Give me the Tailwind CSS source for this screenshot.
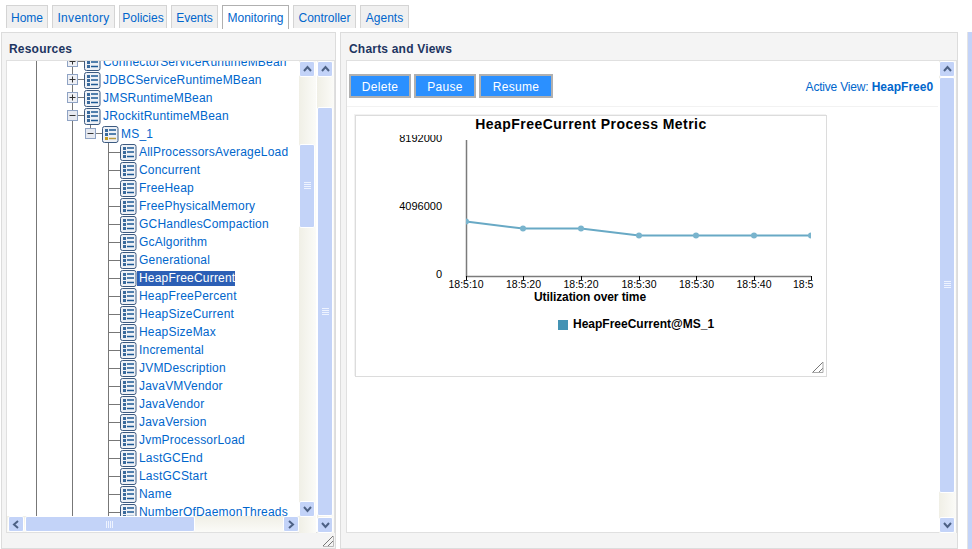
<!DOCTYPE html>
<html lang="en">
<head>
    <meta charset="UTF-8">
    <title>Monitoring</title>
    <script src="https://cdn.jsdelivr.net/npm/@tailwindcss/browser@4"></script>
</head>
<body class="bg-white h-[549px] w-[972px] overflow-hidden font-['Liberation_Sans',sans-serif] text-[12px] text-[#0066cc]">
    <!-- tabs -->
    <nav class="flex gap-[4px] pl-[6px] pt-[5px] h-[32px] items-start">
        <a class="w-[42px] h-[23px] text-center leading-[24px] bg-[#f0f0f0] border border-b-0 border-[#d4d4d4]">Home</a>
        <a class="w-[63px] h-[23px] text-center leading-[24px] bg-[#f0f0f0] border border-b-0 border-[#d4d4d4] tracking-[0.3px]">Inventory</a>
        <a class="w-[48px] h-[23px] text-center leading-[24px] bg-[#f0f0f0] border border-b-0 border-[#d4d4d4]">Policies</a>
        <a class="w-[47px] h-[23px] text-center leading-[24px] bg-[#f0f0f0] border border-b-0 border-[#d4d4d4]">Events</a>
        <a class="w-[67px] h-[24px] text-center leading-[24px] bg-white border border-b-0 border-[#b0b0b0]">Monitoring</a>
        <a class="w-[63px] h-[23px] text-center leading-[24px] bg-[#f0f0f0] border border-b-0 border-[#d4d4d4]">Controller</a>
        <a class="w-[49px] h-[23px] text-center leading-[24px] bg-[#f0f0f0] border border-b-0 border-[#d4d4d4]">Agents</a>
    </nav>

    <div class="flex h-[517px]">
        <!-- left panel -->
        <section class="relative ml-[1px] w-[335px] h-full bg-[#f4f4f4] border border-[#dcdcdc] flex flex-col">
            <h2 class="h-[27px] pl-[7px] pt-[8px] leading-[16px] font-bold text-[#1d3461] text-[12px] tracking-[0.2px]">Resources</h2>
            <div class="ml-[4px] w-[329px] h-[473px] bg-white border border-[#e0e0e0] flex">
                <div class="w-[293px] flex flex-col">
                    <div class="relative h-[456px] overflow-hidden" id="tree">
                        <!-- guide lines -->
                        <div class="absolute left-[29px] top-0 bottom-0 w-px bg-[#777]"></div>
                        <div class="absolute left-[65px] top-0 bottom-0 w-px bg-[#777]"></div>
                        <div class="absolute left-[101px] top-[82px] bottom-0 w-px bg-[#777]"></div>
                        <div class="absolute left-[83px] top-[64px] h-[6px] w-px bg-[#777]"></div>
                        <ul class="relative -mt-[8px] list-none">
                            <li class="flex items-center h-[18px]"><svg class="ml-[53px] shrink-0" width="41" height="18" viewBox="0 0 41 18"><use href="#plus"/><use href="#bean" x="17"/></svg><span class="ml-[2px] tracking-[0.2px]">ConnectorServiceRuntimeMBean</span></li>
                            <li class="flex items-center h-[18px]"><svg class="ml-[53px] shrink-0" width="41" height="18" viewBox="0 0 41 18"><use href="#plus"/><use href="#bean" x="17"/></svg><span class="ml-[2px] tracking-[0.2px]">JDBCServiceRuntimeMBean</span></li>
                            <li class="flex items-center h-[18px]"><svg class="ml-[53px] shrink-0" width="41" height="18" viewBox="0 0 41 18"><use href="#plus"/><use href="#bean" x="17"/></svg><span class="ml-[2px] tracking-[0.2px]">JMSRuntimeMBean</span></li>
                            <li class="flex items-center h-[18px]"><svg class="ml-[53px] shrink-0" width="41" height="18" viewBox="0 0 41 18"><use href="#minus"/><use href="#bean" x="17"/></svg><span class="ml-[2px] tracking-[0.2px]">JRockitRuntimeMBean</span></li>
                            <li class="flex items-center h-[18px]"><svg class="ml-[71px] shrink-0" width="41" height="18" viewBox="0 0 41 18"><use href="#minus"/><use href="#server" x="17"/></svg><span class="ml-[2px] tracking-[0.2px]">MS_1</span></li>
                            <li class="flex items-center h-[18px]"><svg class="ml-[101px] shrink-0" width="30" height="18" viewBox="0 0 30 18"><use href="#leaf"/></svg><span class="ml-[1px] tracking-[0.2px]">AllProcessorsAverageLoad</span></li>
                            <li class="flex items-center h-[18px]"><svg class="ml-[101px] shrink-0" width="30" height="18" viewBox="0 0 30 18"><use href="#leaf"/></svg><span class="ml-[1px] tracking-[0.2px]">Concurrent</span></li>
                            <li class="flex items-center h-[18px]"><svg class="ml-[101px] shrink-0" width="30" height="18" viewBox="0 0 30 18"><use href="#leaf"/></svg><span class="ml-[1px] tracking-[0.2px]">FreeHeap</span></li>
                            <li class="flex items-center h-[18px]"><svg class="ml-[101px] shrink-0" width="30" height="18" viewBox="0 0 30 18"><use href="#leaf"/></svg><span class="ml-[1px] tracking-[0.2px]">FreePhysicalMemory</span></li>
                            <li class="flex items-center h-[18px]"><svg class="ml-[101px] shrink-0" width="30" height="18" viewBox="0 0 30 18"><use href="#leaf"/></svg><span class="ml-[1px] tracking-[0.2px]">GCHandlesCompaction</span></li>
                            <li class="flex items-center h-[18px]"><svg class="ml-[101px] shrink-0" width="30" height="18" viewBox="0 0 30 18"><use href="#leaf"/></svg><span class="ml-[1px] tracking-[0.2px]">GcAlgorithm</span></li>
                            <li class="flex items-center h-[18px]"><svg class="ml-[101px] shrink-0" width="30" height="18" viewBox="0 0 30 18"><use href="#leaf"/></svg><span class="ml-[1px] tracking-[0.2px]">Generational</span></li>
                            <li class="flex items-center h-[18px]"><svg class="ml-[101px] shrink-0" width="30" height="18" viewBox="0 0 30 18"><use href="#leaf"/></svg><span class="-ml-[1px] pl-[2px] tracking-[0.2px] bg-[#2c5fb5] text-white leading-[15px]">HeapFreeCurrent</span></li>
                            <li class="flex items-center h-[18px]"><svg class="ml-[101px] shrink-0" width="30" height="18" viewBox="0 0 30 18"><use href="#leaf"/></svg><span class="ml-[1px] tracking-[0.2px]">HeapFreePercent</span></li>
                            <li class="flex items-center h-[18px]"><svg class="ml-[101px] shrink-0" width="30" height="18" viewBox="0 0 30 18"><use href="#leaf"/></svg><span class="ml-[1px] tracking-[0.2px]">HeapSizeCurrent</span></li>
                            <li class="flex items-center h-[18px]"><svg class="ml-[101px] shrink-0" width="30" height="18" viewBox="0 0 30 18"><use href="#leaf"/></svg><span class="ml-[1px] tracking-[0.2px]">HeapSizeMax</span></li>
                            <li class="flex items-center h-[18px]"><svg class="ml-[101px] shrink-0" width="30" height="18" viewBox="0 0 30 18"><use href="#leaf"/></svg><span class="ml-[1px] tracking-[0.2px]">Incremental</span></li>
                            <li class="flex items-center h-[18px]"><svg class="ml-[101px] shrink-0" width="30" height="18" viewBox="0 0 30 18"><use href="#leaf"/></svg><span class="ml-[1px] tracking-[0.2px]">JVMDescription</span></li>
                            <li class="flex items-center h-[18px]"><svg class="ml-[101px] shrink-0" width="30" height="18" viewBox="0 0 30 18"><use href="#leaf"/></svg><span class="ml-[1px] tracking-[0.2px]">JavaVMVendor</span></li>
                            <li class="flex items-center h-[18px]"><svg class="ml-[101px] shrink-0" width="30" height="18" viewBox="0 0 30 18"><use href="#leaf"/></svg><span class="ml-[1px] tracking-[0.2px]">JavaVendor</span></li>
                            <li class="flex items-center h-[18px]"><svg class="ml-[101px] shrink-0" width="30" height="18" viewBox="0 0 30 18"><use href="#leaf"/></svg><span class="ml-[1px] tracking-[0.2px]">JavaVersion</span></li>
                            <li class="flex items-center h-[18px]"><svg class="ml-[101px] shrink-0" width="30" height="18" viewBox="0 0 30 18"><use href="#leaf"/></svg><span class="ml-[1px] tracking-[0.2px]">JvmProcessorLoad</span></li>
                            <li class="flex items-center h-[18px]"><svg class="ml-[101px] shrink-0" width="30" height="18" viewBox="0 0 30 18"><use href="#leaf"/></svg><span class="ml-[1px] tracking-[0.2px]">LastGCEnd</span></li>
                            <li class="flex items-center h-[18px]"><svg class="ml-[101px] shrink-0" width="30" height="18" viewBox="0 0 30 18"><use href="#leaf"/></svg><span class="ml-[1px] tracking-[0.2px]">LastGCStart</span></li>
                            <li class="flex items-center h-[18px]"><svg class="ml-[101px] shrink-0" width="30" height="18" viewBox="0 0 30 18"><use href="#leaf"/></svg><span class="ml-[1px] tracking-[0.2px]">Name</span></li>
                            <li class="flex items-center h-[18px]"><svg class="ml-[101px] shrink-0" width="30" height="18" viewBox="0 0 30 18"><use href="#leaf"/></svg><span class="ml-[1px] tracking-[0.2px]">NumberOfDaemonThreads</span></li>
                        </ul>
                    </div>
                    <!-- horizontal scrollbar -->
                    <div class="h-[16px] pl-px flex bg-gradient-to-b from-[#f0efe6] to-[#fbfbf8] gap-[1px]">
                        <button class="w-[16px] h-[16px] bg-[#c3d3f8] border border-white rounded-[2px] flex items-center justify-center"><svg width="8" height="9" viewBox="0 0 8 9"><path d="M6 1 2 4.5 6 8" fill="none" stroke="#4d6185" stroke-width="2"/></svg></button>
                        <div class="w-[170px] h-[16px] bg-[#c3d3f8] border border-white rounded-[2px] flex items-center justify-center"><svg width="8" height="7" viewBox="0 0 8 7"><path d="M.5 0v7M2.5 0v7M4.5 0v7M6.5 0v7" stroke="#eef3ff"/></svg></div>
                        <div class="flex-1"></div>
                        <button class="w-[16px] h-[16px] bg-[#c3d3f8] border border-white rounded-[2px] flex items-center justify-center"><svg width="8" height="9" viewBox="0 0 8 9"><path d="M2 1 6 4.5 2 8" fill="none" stroke="#4d6185" stroke-width="2"/></svg></button>
                    </div>
                </div>
                <!-- tree vertical scrollbar -->
                <div class="w-[17px] h-[472px] flex flex-col bg-gradient-to-r from-[#f0efe6] to-[#fbfbf8]">
                    <button class="w-[16px] h-[16px] bg-[#c3d3f8] border border-white rounded-[2px] flex items-center justify-center"><svg width="9" height="8" viewBox="0 0 9 8"><path d="M1 6 4.5 2 8 6" fill="none" stroke="#4d6185" stroke-width="2"/></svg></button>
                    <div class="mt-[67px] w-[16px] h-[84px] bg-[#c3d3f8] border border-white rounded-[2px] flex items-center justify-center"><svg width="7" height="8" viewBox="0 0 7 8"><path d="M0 .5h7M0 2.5h7M0 4.5h7M0 6.5h7" stroke="#eef3ff"/></svg></div>
                    <div class="flex-1"></div>
                    <button class="mb-[16px] w-[16px] h-[16px] bg-[#c3d3f8] border border-white rounded-[2px] flex items-center justify-center"><svg width="9" height="8" viewBox="0 0 9 8"><path d="M1 2 4.5 6 8 2" fill="none" stroke="#4d6185" stroke-width="2"/></svg></button>
                </div>
                <!-- outer vertical scrollbar -->
                <div class="ml-[1px] w-[17px] h-[472px] flex flex-col bg-gradient-to-r from-[#f0efe6] to-[#fbfbf8]">
                    <button class="w-[16px] h-[16px] bg-[#c3d3f8] border border-white rounded-[2px] flex items-center justify-center"><svg width="9" height="8" viewBox="0 0 9 8"><path d="M1 6 4.5 2 8 6" fill="none" stroke="#4d6185" stroke-width="2"/></svg></button>
                    <div class="mt-[30px] w-[16px] flex-1 bg-[#c3d3f8] border border-white rounded-[2px] flex items-center justify-center"><svg width="7" height="8" viewBox="0 0 7 8"><path d="M0 .5h7M0 2.5h7M0 4.5h7M0 6.5h7" stroke="#eef3ff"/></svg></div>
                    <button class="w-[16px] h-[16px] mt-[1px] bg-[#c3d3f8] border border-white rounded-[2px] flex items-center justify-center"><svg width="9" height="8" viewBox="0 0 9 8"><path d="M1 2 4.5 6 8 2" fill="none" stroke="#4d6185" stroke-width="2"/></svg></button>
                </div>
            </div>
            <svg class="absolute right-[1px] bottom-[1px]" width="12" height="12" viewBox="0 0 12 12"><path d="M1 11 11 1M6 11 11 6" stroke="#777" fill="none"/><path d="M1 11.500h10.500V1" stroke="#bbb" fill="none"/></svg>
        </section>

        <!-- right panel -->
        <section class="ml-[4px] w-[618px] h-full bg-[#f4f4f4] border border-[#dcdcdc] flex flex-col">
            <h2 class="h-[27px] pl-[8px] pt-[8px] leading-[16px] font-bold text-[#1d3461] text-[12px] tracking-[0.2px]">Charts and Views</h2>
            <div class="ml-[5px] w-[611px] h-[473px] bg-white border border-[#e0e0e0] flex">
                <div class="w-[594px] flex flex-col">
                    <div class="h-[46px] shrink-0 border-b border-[#f2f2f2] flex items-start pt-[13px] pl-[2px] pr-[5px]">
                        <button class="w-[62px] h-[24px] pt-px bg-[#2b90ff] border-2 border-[#b0b0b0] text-white tracking-[0.3px]">Delete</button>
                        <button class="ml-[3px] w-[62px] h-[24px] pt-px bg-[#2b90ff] border-2 border-[#b0b0b0] text-white tracking-[0.3px]">Pause</button>
                        <button class="ml-[3px] w-[74px] h-[24px] pt-px bg-[#2b90ff] border-2 border-[#b0b0b0] text-white tracking-[0.3px]">Resume</button>
                        <p class="ml-auto leading-[26px]"><span class="tracking-[-0.2px]">Active View:</span> <b>HeapFree0</b></p>
                    </div>
                    <!-- chart card -->
                    <div class="relative ml-[8px] mt-[8px] w-[472px] h-[262px] border border-[#dcdcdc] shadow-[-1px_-1px_0_#f2f2f2] overflow-hidden">
                        <svg class="absolute inset-0" width="470" height="260" viewBox="0 0 470 260" font-family="Liberation Sans, sans-serif" font-size="11" fill="#000">
                            <text x="86" y="26" text-anchor="end">8192000</text>
                            <rect x="40" y="8" width="60" height="11" fill="#fff"/>
                            <text x="235" y="13" text-anchor="middle" font-size="14" font-weight="bold" letter-spacing="0.45">HeapFreeCurrent Process Metric</text>
                            <text x="86" y="94" text-anchor="end">4096000</text>
                            <text x="86" y="162" text-anchor="end">0</text>
                            <path d="M110.500 24V160.500H455" fill="none" stroke="#7b7b7b" stroke-width="1.500"/>
                            <path d="M110.500 160v4M167.500 160v4M225.500 160v4M283.500 160v4M340.500 160v4M398.500 160v4M455.500 160v4" stroke="#000"/>
                            <path d="M110 105.500 167 112.500H225L283 119.500H340L398 119.500H455" fill="none" stroke="#68a9c5" stroke-width="2"/>
                            <g fill="#79b4cd"><circle cx="167" cy="112.500" r="3"/><circle cx="225" cy="112.500" r="3"/><circle cx="283" cy="119.500" r="3"/><circle cx="340" cy="119.500" r="3"/><circle cx="398" cy="119.500" r="3"/><path d="M110 102.500a3 3 0 0 1 0 6zM455 116.500v6a3 3 0 0 1 0-6z"/></g>
                            <g font-size="10.500">
                                <text x="110" y="172" text-anchor="middle">18:5:10</text>
                                <text x="167.500" y="172" text-anchor="middle">18:5:20</text>
                                <text x="225" y="172" text-anchor="middle">18:5:20</text>
                                <text x="283" y="172" text-anchor="middle">18:5:30</text>
                                <text x="340.500" y="172" text-anchor="middle">18:5:30</text>
                                <text x="398" y="172" text-anchor="middle">18:5:40</text>
                                <text x="437" y="172">18:5</text>
                            </g>
                            <text x="234" y="185" text-anchor="middle" font-size="12" font-weight="bold" letter-spacing="-0.1">Utilization over time</text>
                            <rect x="202" y="204" width="10" height="10" fill="#4493b4"/>
                            <text x="217" y="212" font-size="12" font-weight="bold">HeapFreeCurrent@MS_1</text>
                            <path d="M456 257 467 246M462 257 467 252" stroke="#777" fill="none"/>
                            <path d="M456 256.500H467V246" stroke="#aaa" fill="none"/>
                        </svg>
                    </div>
                </div>
                <!-- content vertical scrollbar -->
                <div class="ml-[1px] w-[17px] h-[472px] flex flex-col bg-gradient-to-r from-[#f0efe6] to-[#fbfbf8]">
                    <button class="w-[16px] h-[16px] bg-[#c3d3f8] border border-white rounded-[2px] flex items-center justify-center"><svg width="9" height="8" viewBox="0 0 9 8"><path d="M1 6 4.5 2 8 6" fill="none" stroke="#4d6185" stroke-width="2"/></svg></button>
                    <div class="w-[16px] h-[416px] bg-[#c3d3f8] border border-white rounded-[2px] flex items-center justify-center"><svg width="7" height="8" viewBox="0 0 7 8"><path d="M0 .5h7M0 2.5h7M0 4.5h7M0 6.5h7" stroke="#eef3ff"/></svg></div>
                    <div class="flex-1"></div>
                    <button class="w-[16px] h-[16px] bg-[#c3d3f8] border border-white rounded-[2px] flex items-center justify-center"><svg width="9" height="8" viewBox="0 0 9 8"><path d="M1 2 4.5 6 8 2" fill="none" stroke="#4d6185" stroke-width="2"/></svg></button>
                </div>
            </div>
        </section>
        <!-- window scrollbar, cut off by the screenshot -->
        <div class="ml-[9px] w-[5px] h-full bg-[#c3d3f8] border-l border-[#e4e4e4]"></div>
    </div>

    <!-- tree icons -->
    <svg class="hidden" width="0" height="0">
        <defs>
            <g id="plus"><path d="M17 8.500h8" stroke="#777"/><rect x="7.500" y="3.500" width="10" height="10" fill="#eef0f5" stroke="#8fa3c4"/><path d="M9.500 8.500h6M12.500 5.500v6" stroke="#333"/></g>
            <g id="minus"><path d="M17 8.500h8" stroke="#777"/><rect x="7.500" y="3.500" width="10" height="10" fill="#e6e9f0" stroke="#8fa3c4"/><path d="M9.500 8.500h6" stroke="#333"/></g>
            <g id="bean">
                <rect x="7.500" y="1.500" width="15.500" height="16" rx="2" fill="#eef1f6" stroke="#3c5a80"/>
                <path d="M10 4h3v3h-3zM10 8h3v3h-3zM10 12h3v3h-3z" fill="#3a6a9c"/>
                <path d="M14 5h7M14 9h7M14 13.500h7" stroke="#1f5a94" stroke-width="1.500"/>
            </g>
            <g id="server">
                <rect x="7.500" y="1.500" width="15.500" height="16" rx="2" fill="#eef1f6" stroke="#3c5a80"/>
                <path d="M10 4h3v3h-3zM10 8h3v3h-3z" fill="#3a6a9c"/>
                <path d="M14 5h7M14 9h7" stroke="#1f5a94" stroke-width="1.500"/>
                <path d="M10 12h3v3h-3z" fill="#c09a20"/><path d="M14 13.500h7" stroke="#b79a40" stroke-width="1.500"/>
            </g>
            <g id="leaf">
                <path d="M.5 9.500h12" stroke="#777"/>
                <rect x="12.500" y="1.500" width="15.500" height="16" rx="2" fill="#eef1f6" stroke="#3c5a80"/>
                <path d="M15 4h3v3h-3zM15 8h3v3h-3zM15 12h3v3h-3z" fill="#3a6a9c"/>
                <path d="M19 5h7M19 9h7M19 13.500h7" stroke="#1f5a94" stroke-width="1.500"/>
            </g>
        </defs>
    </svg>
</body>
</html>
